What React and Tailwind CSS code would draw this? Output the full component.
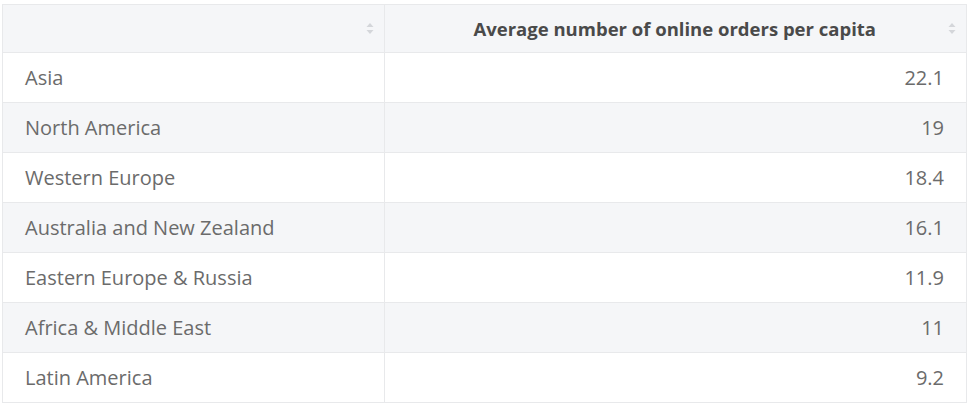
import React from "react";

const rows = [
  ["Asia", "22.1"],
  ["North America", "19"],
  ["Western Europe", "18.4"],
  ["Australia and New Zealand", "16.1"],
  ["Eastern Europe & Russia", "11.9"],
  ["Africa & Middle East", "11"],
  ["Latin America", "9.2"],
];

const SortIcon = () => (
  <svg width="8" height="13" viewBox="0 0 8 13" className="shrink-0">
    <path d="M4 1 L7.5 5 L0.5 5 Z" fill="#d4d6da" />
    <path d="M0.5 8 L7.5 8 L4 12 Z" fill="#d4d6da" />
  </svg>
);

export default function App() {
  return (
    <div className="bg-white pl-[2px] pt-[4px] h-[414px]" style={{ fontFamily: '"Open Sans", sans-serif' }}>
      <table className="w-[965px] border-collapse table-fixed">
        <colgroup>
          <col className="w-[382px]" />
          <col />
        </colgroup>
        <thead>
          <tr className="bg-[#f5f6f8] h-[48px]">
            <th className="border border-[#e8e9eb] px-[10px]">
              <div className="flex justify-end items-center">
                <SortIcon />
              </div>
            </th>
            <th className="border border-[#e8e9eb] pl-[10px] pr-[10px]">
              <div className="flex justify-end items-center gap-[72px]">
                <span className="text-[18.5px] font-bold text-[#4a4a4a]">Average number of online orders per capita</span>
                <SortIcon />
              </div>
            </th>
          </tr>
        </thead>
        <tbody>
          {rows.map(([name, val], i) => (
            <tr key={name} className={`h-[50px] ${i % 2 === 1 ? "bg-[#f5f6f8]" : "bg-white"}`}>
              <td className="border border-[#e8e9eb] pl-[22px] text-[20px] text-[#6b6b6b]">{name}</td>
              <td className="border border-[#e8e9eb] pr-[22px] text-right text-[20px] text-[#6b6b6b]">{val}</td>
            </tr>
          ))}
        </tbody>
      </table>
    </div>
  );
}
